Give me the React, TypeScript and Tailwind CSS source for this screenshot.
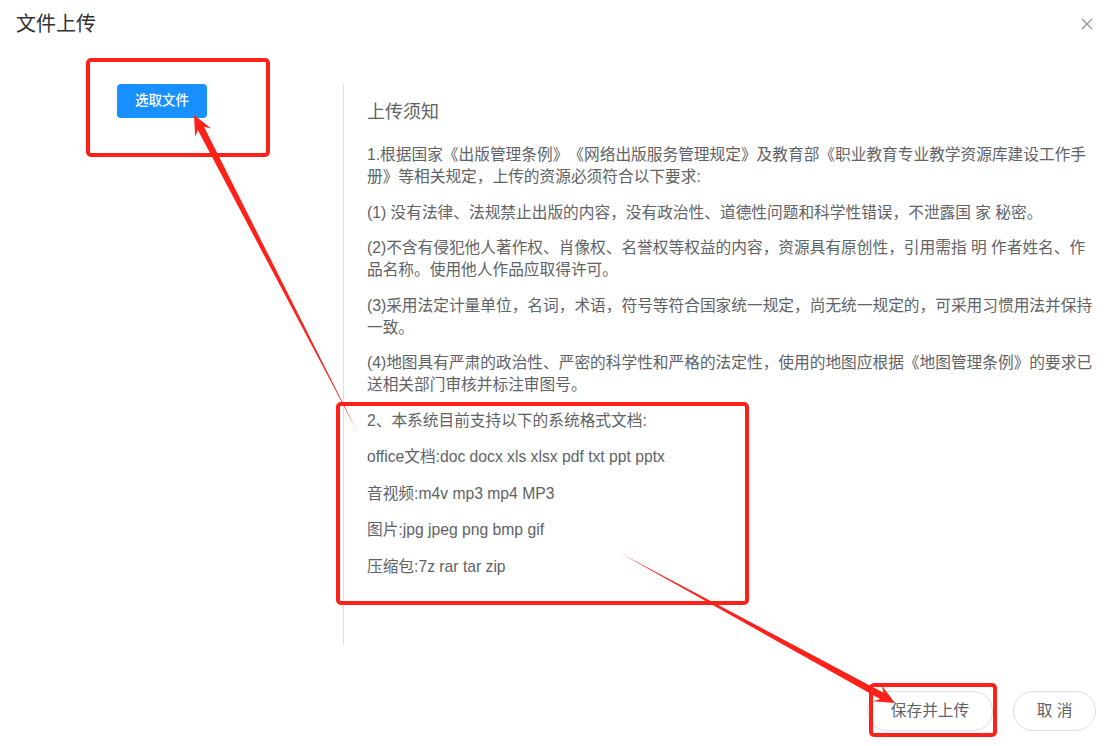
import React from "react";

const rules = [
  "1.根据国家《出版管理条例》《网络出版服务管理规定》及教育部《职业教育专业教学资源库建设工作手册》等相关规定，上传的资源必须符合以下要求:",
  "(1) 没有法律、法规禁止出版的内容，没有政治性、道德性问题和科学性错误，不泄露国 家 秘密。",
  "(2)不含有侵犯他人著作权、肖像权、名誉权等权益的内容，资源具有原创性，引用需指 明 作者姓名、作品名称。使用他人作品应取得许可。",
  "(3)采用法定计量单位，名词，术语，符号等符合国家统一规定，尚无统一规定的，可采用习惯用法并保持一致。",
  "(4)地图具有严肃的政治性、严密的科学性和严格的法定性，使用的地图应根据《地图管理条例》的要求已送相关部门审核并标注审图号。",
  "2、本系统目前支持以下的系统格式文档:",
];

const formats = [
  "office文档:doc docx xls xlsx pdf txt ppt pptx",
  "音视频:m4v mp3 mp4 MP3",
  "图片:jpg jpeg png bmp gif",
  "压缩包:7z rar tar zip",
];

function Annotations() {
  const red = "#fe2119";
  return (
    <svg className="absolute inset-0 pointer-events-none" width="1117" height="746" viewBox="0 0 1117 746">
      <rect x="88" y="60" width="180" height="95" rx="3" fill="none" stroke={red} strokeWidth="4" />
      <rect x="338" y="404" width="409" height="199" rx="3" fill="none" stroke={red} strokeWidth="4" />
      <rect x="871" y="685" width="124" height="50" rx="3" fill="none" stroke={red} strokeWidth="4" />
      {/* arrow to 选取文件 */}
      <polygon
        fill={red}
        points="358,433 204,126.7 211.2,128.6 194,115 195.2,136.9 197.8,129.9"
      />
      {/* arrow to 保存并上传 */}
      <polygon
        fill={red}
        points="620,553 880.1,698.9 873.1,701.3 895,703 881.7,685.5 883.5,692.7"
      />
    </svg>
  );
}

export default function App() {
  return (
    <div className="relative w-[1117px] h-[746px] bg-white overflow-hidden font-['Liberation_Sans','Noto_Sans_CJK_SC',sans-serif] text-[#606266] [text-spacing-trim:space-all]">
      <div className="h-[48px] flex items-center justify-between pl-4 pr-[24px]">
        <h2 className="text-[20px] text-[#303133] leading-6">文件上传</h2>
        <svg width="12" height="12" viewBox="0 0 12 12" className="text-[#909399]">
          <path d="M1 1L11 11M11 1L1 11" stroke="currentColor" strokeWidth="1.2" />
        </svg>
      </div>

      <div className="flex mt-[36px]">
        <div className="w-[343px] pl-[117px]">
          <button className="w-[90px] h-[34px] rounded bg-[#1890ff] text-white text-[13.5px] font-medium">
            选取文件
          </button>
        </div>
        <div className="h-[561px] border-l border-[#dcdfe6] pl-[23px] pt-4">
          <div className="w-[729px] text-[15.7px] leading-[22px]">
            <h3 className="text-[18px] leading-6 mb-5">上传须知</h3>
            {rules.map((r, i) => (
              <p key={i} className={i === 0 ? "" : "mt-[13.5px]"}>
                {r}
              </p>
            ))}
            {formats.map((f) => (
              <p key={f} className="mt-[14.5px]">
                {f}
              </p>
            ))}
          </div>
        </div>
      </div>

      <div className="flex justify-end gap-5 pr-[21px] mt-[46px]">
        <button className="w-[126px] h-10 rounded-full border border-[#dcdfe6] text-[15.7px] text-[#606266]">
          保存并上传
        </button>
        <button className="w-[83px] h-10 rounded-full border border-[#dcdfe6] text-[15.7px] text-[#606266]">
          取 消
        </button>
      </div>

      <Annotations />
    </div>
  );
}
